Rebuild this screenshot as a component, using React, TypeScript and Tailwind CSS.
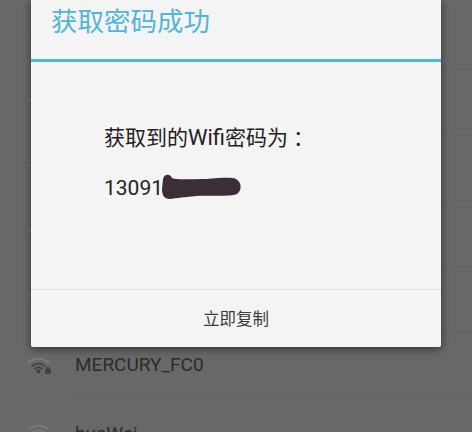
const cjk = '"Roboto","Noto Sans CJK SC",sans-serif';

function Wifi({ lock, dark }: { lock?: boolean; dark?: boolean }) {
  return (
    <svg width="24" height="17" viewBox="0 0 24 17" fill="none" className="shrink-0">
      <path d="M1 6C7 0.500 16 0.500 22 6" stroke="#7b7b7b" strokeWidth="1.800" />
      <path d="M4.500 9.500C9 5.500 14 5.500 18.500 9.500" stroke={dark ? '#444444' : '#7b7b7b'} strokeWidth="1.800" />
      <path d="M7.500 12C10 10 13 10 15.500 12" stroke="#3f3f3f" strokeWidth="1.800" />
      <circle cx="11.500" cy="14.500" r="2" fill="#3f3f3f" />
      {lock && <path d="M18.500 12.500h5v4h-5zM19.700 12.500v-1a1.300 1.300 0 0 1 2.600 0v1" fill="#3f3f3f" stroke="#3f3f3f" strokeWidth="0.700" />}
    </svg>
  );
}

function Row({ h, label, lock, dark, top }: { h: string; label?: string; lock?: boolean; dark?: boolean; top?: boolean }) {
  return (
    <div className={`flex ${h} pl-[27px] ${top ? 'items-start pt-[25px]' : 'items-center'}`}>
      <Wifi lock={lock} dark={dark} />
      <div className={`ml-[21px] flex h-full flex-1 border-b border-[#626262] pl-[3px] ${top ? '-mt-[25px] items-start pt-[23px]' : 'items-center'}`}>
        {label && <span className="text-[19px] leading-[24px] text-[#2b2b2b]">{label}</span>}
      </div>
    </div>
  );
}

export default function App() {
  return (
    <div className="relative h-[432px] w-[472px] overflow-hidden bg-[#686868]" style={{ fontFamily: cjk }}>
      <Row h="h-[70px]" dark />
      <Row h="h-[66px]" dark />
      <Row h="h-[65px]" dark />
      <Row h="h-[66px]" dark />
      <Row h="h-[65px]" dark />
      <Row h="h-[67px]" label="MERCURY_FC0" lock dark />
      <Row h="h-[67px]" label="huaWei" top />

      <div className="absolute left-[31px] top-0 flex h-[347px] w-[410px] flex-col rounded-b-[2px] bg-[#f4f4f5] shadow-[0_2px_8px_rgba(0,0,0,0.55)]">
        <div className="flex h-[62px] shrink-0 items-start border-b-[3px] border-[#4db8dc] pl-[20px] pt-[6px]">
          <h1 className="text-[26.500px] leading-[32px] font-normal text-[#50b6d8]">获取密码成功</h1>
        </div>
        <div className="flex-1 pl-[73px] pt-[62px] text-[21px] text-[#222222]">
          <p className="leading-[28px]">获取到的<span className="text-[22px]">Wifi</span>密码为<span className="ml-[5px]">：</span></p>
          <div className="relative mt-[22px] flex h-[28px] items-center leading-[28px]">
            <span>13091</span>
            <svg width="82" height="28" viewBox="0 0 82 28" className="absolute left-[57px] -top-[1px]">
              <path d="M2 6C3 1 9 0 11 5C13 7 30 6 45 6C60 5 70 4 75 6C81 9 81 18 76 21C68 24 50 22 35 23C25 24 15 25 9 26C3 26 1 22 1 16Z" fill="#3a2f38" />
            </svg>
          </div>
        </div>
        <div className="flex h-[58px] shrink-0 items-center justify-center border-t border-[#e0e0e0] pt-[3px] text-[16.500px] text-[#3a3a3a]">
          立即复制
        </div>
      </div>
    </div>
  );
}
